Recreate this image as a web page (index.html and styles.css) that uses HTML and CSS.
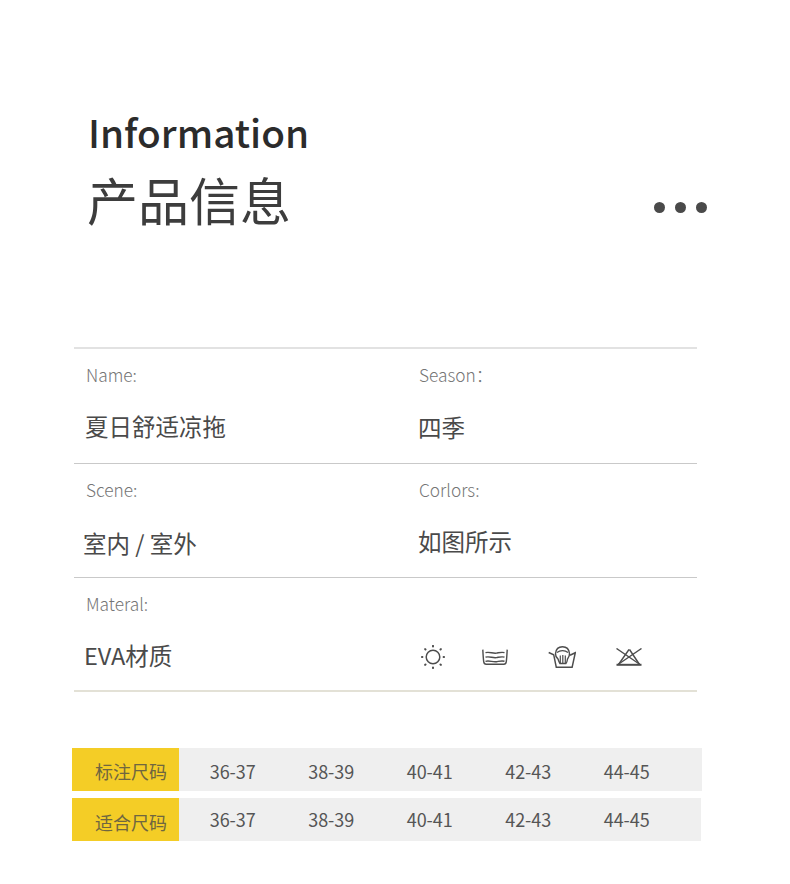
FILE: index.html
```html
<!DOCTYPE html>
<html lang="zh-CN">
<head>
<meta charset="utf-8">
<title>产品信息</title>
<link rel="stylesheet" href="styles.css">
</head>
<body>
<header class="head">
  <div class="titles">
    <h2 class="en">Information</h2>
    <h1 class="cn">产品信息</h1>
  </div>
  <div class="dots"><i></i><i></i><i></i></div>
</header>

<section class="info">
  <div class="row first">
    <div class="cell"><p class="label">Name:</p><p class="value name">夏日舒适凉拖</p></div>
    <div class="cell"><p class="label right">Season：</p><p class="value low">四季</p></div>
  </div>
  <div class="row">
    <div class="cell"><p class="label">Scene:</p><p class="value scene">室内 / 室外</p></div>
    <div class="cell"><p class="label right">Corlors:</p><p class="value shift">如图所示</p></div>
  </div>
  <div class="row last">
    <div class="cell"><p class="label">Materal:</p><p class="value eva">EVA材质</p></div>
    <div class="cell icons">
      <svg class="ic sun" viewBox="0 0 24 24" fill="none" stroke="#4d4d4d" stroke-width="1.500"><circle cx="12" cy="12" r="6.800"/><path stroke-width="2" stroke-linecap="round" d="M12 .9v.5M12 22.600v.5M.9 12h.5M22.600 12h.5M4.100 4.100l.4.4M19.500 19.500l.4.4M4.100 19.900l.4-.4M19.500 4.500l.4-.4"/></svg>
      <svg class="ic basin" viewBox="0 0 26 16" fill="none" stroke="#4d4d4d" stroke-width="1.400"><path d="M.8.600c.2 4 .4 8 .9 12 .2 1.500 1 2.600 2.500 2.600h17.600c1.500 0 2.300-1.100 2.500-2.600.5-4 .7-8 .9-12"/><path d="M3.500 3.700c4-1.200 7 1 11 .4 2.500-.4 5-1.300 8-.5M3.500 8.200c4-1.200 7 1 11 .4 2.500-.4 5-1.300 8-.5M3.500 12.300c4-1.200 7 1 11 .4 2.500-.4 5-1.300 8-.5"/></svg>
      <svg class="ic wash" viewBox="0 0 28 22" fill="none" stroke="#4d4d4d" stroke-width="1.500"><path d="M.7 6.500l5 2.200 2.600 12.600h15.800l3.200-14.600-5.300 2.500"/><path fill="#fff" stroke-width="1.400" d="M7.500 7.500C8 3 11 .8 14.500.8S21 3 21.500 7.500c.2 2.500-1 4-2 5.500-.4 2.500-.8 4-1.500 4.500h-6c-1-1.500-1.500-3-2-4.500-1.500-1.500-2.800-3-2.500-5.500z"/><path stroke-width="1.200" d="M12.300 9.500v8M14.800 9V17.500M17.300 9.500v8M9 6.500c3-2.500 8-2.500 11 0"/></svg>
      <svg class="ic iron" viewBox="0 0 26 18" fill="none" stroke="#4d4d4d" stroke-width="1.400"><path d="M13 1.500L2.500 16.500M13.500 1.500l10 15"/><path stroke-width="2" d="M.5 16.800h25"/><path d="M.5.500l23.500 16M25.500.500L2 16.500"/></svg>
    </div>
  </div>
</section>

<section class="sizes">
  <div class="size-row">
    <div class="tag">标注尺码</div>
    <div class="num">36-37</div><div class="num">38-39</div><div class="num">40-41</div><div class="num">42-43</div><div class="num">44-45</div>
  </div>
  <div class="size-row">
    <div class="tag">适合尺码</div>
    <div class="num">36-37</div><div class="num">38-39</div><div class="num">40-41</div><div class="num">42-43</div><div class="num">44-45</div>
  </div>
</section>
</body>
</html>
```
FILE: styles.css
```css
* { box-sizing: border-box; }
html, body { margin: 0; padding: 0; }
body {
  width: 790px;
  height: 884px;
  overflow: hidden;
  background: #fff;
  font-family: "Noto Sans CJK SC", "Noto Sans", sans-serif;
  color: #444;
}
p, h1, h2 { margin: 0; font-weight: 400; }

.head {
  display: flex;
  justify-content: space-between;
  align-items: flex-start;
  height: 347px;
  padding: 103px 83px 0 87px;
}
.en { font-size: 38.700px; line-height: 56px; margin-left: 1px; color: #2b2b2b; font-weight: 500; }
.cn { font-size: 51px; line-height: 68px; margin-top: 6px; color: #3d3d3d; }
.dots { display: flex; gap: 10px; margin-top: 99px; }
.dots i { display: block; width: 11px; height: 11px; border-radius: 50%; background: #4a4a4a; }

.info { margin-left: 74px; width: 623px; border-top: 2px solid #e2e2e2; }
.row {
  display: grid;
  grid-template-columns: 334px 1fr;
  height: 114px;
  padding-left: 11px;
  border-bottom: 1px solid #c9c9c9;
}
.row.first { height: 115px; }
.row.last { border-bottom: 2px solid #e3e1d6; }
.label { font-size: 17.300px; line-height: 24px; margin-top: 14px; margin-left: 1px; color: #757575; font-weight: 300; }
.label.right { margin-left: 0; }
.value { font-size: 23.500px; line-height: 34px; margin-top: 21px; color: #4a4a4a; }
.value.name { margin-top: 22px; }
.value.low { margin-top: 23px; margin-left: -1px; }
.value.scene { margin-top: 24px; margin-left: -2px; }
.value.shift { margin-top: 22px; margin-left: -1px; }
.value.eva { margin-top: 22px; margin-left: -1px; }

.icons { display: flex; align-items: center; padding: 46px 0 0 2px; }
.ic { display: block; flex: none; }
.sun { width: 24px; height: 24px; margin-right: 37px; }
.basin { width: 26px; height: 16px; margin-right: 40px; }
.wash { width: 28px; height: 22px; margin-right: 40px; }
.iron { width: 26px; height: 18px; }

.sizes { margin: 56px 0 0 72px; width: 630px; display: flex; flex-direction: column; gap: 7px; }
.size-row {
  display: grid;
  grid-template-columns: 111.500px repeat(5, 98.500px);
  height: 43px;
  background: #efefef;
  align-items: center;
  font-size: 18px;
}
.size-row:last-child { margin-right: 1px; }
.tag {
  width: 107px;
  height: 43px;
  background: #f4cd26;
  color: #6f6640;
  text-align: right;
  padding: 10px 12px 0 0;
  line-height: 27px;
}
.num { text-align: center; color: #555; line-height: 27px; padding-top: 4px; }
.size-row:last-child .tag { padding-top: 11px; }
.size-row:last-child .num { padding-top: 0; }
```
